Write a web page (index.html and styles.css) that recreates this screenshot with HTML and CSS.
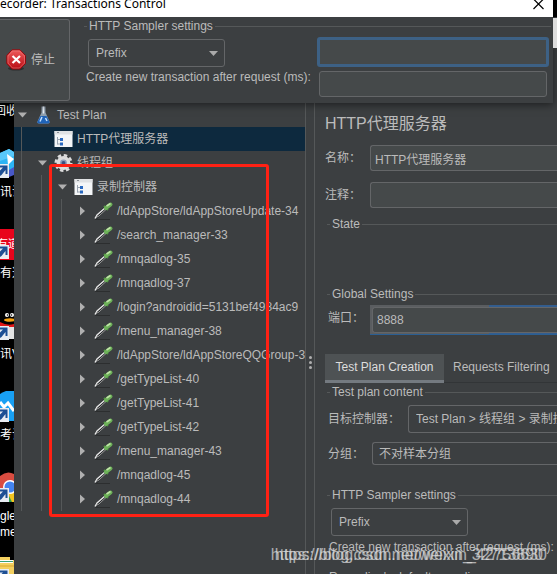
FILE: index.html
```
<!DOCTYPE html>
<html lang="zh-CN">
<head>
    <meta charset="UTF-8">
    <meta name="viewport" content="width=device-width, initial-scale=1.0">
    <title>Recorder: Transactions Control</title>
    <link rel="stylesheet" href="styles.css">
</head>
<body>
    <!-- Icons shared by the tree and the desktop -->
    <svg class="sprite" aria-hidden="true">
        <defs>
            <linearGradient id="stopRed" x1="0" y1="0" x2="0" y2="1">
                <stop offset="0" stop-color="#ef5a5a"/>
                <stop offset="1" stop-color="#b80c14"/>
            </linearGradient>
            <symbol id="open" viewBox="0 0 20 24"><path d="M4 9.500h9L8.500 14.500z" fill="#b0b0b0"/></symbol>
            <symbol id="closed" viewBox="0 0 20 24"><path d="M6 7.500l5 4.500-5 4.500z" fill="#b0b0b0"/></symbol>
            <symbol id="flask" viewBox="0 0 20 24">
                <path d="M7.500 3.500h4v6l4 9c.5 1.300-.2 2-1.500 2H5c-1.300 0-2-.7-1.500-2l4-9z" fill="#8f9fae"/>
                <path d="M6.500 13h6l3 5.500c.4 1.200 0 2-1.500 2H5c-1.500 0-1.900-.8-1.500-2z" fill="#1f63b8"/>
                <path d="M8 14l-2 4.500M11.500 15l1.500 3" stroke="#c4e0ff" stroke-width="1.500"/>
                <path d="M9.500 3.500v7" stroke="#e8eef4" stroke-width="1.500"/>
            </symbol>
            <symbol id="window" viewBox="0 0 20 24">
                <path d="M.5 4h18v16H.5z" fill="#f4f6f8"/>
                <path d="M.5 4h18v3.500H.5z" fill="#e0e2e4"/>
                <path d="M3 5.500h2" stroke="#8a9096"/>
                <path d="M3.500 10v7.500M3.500 12.500h3M3.500 17h3" stroke="#9aa4b0" fill="none"/>
                <path d="M6 11h3v3H6zM6 15.500h3v3H6z" fill="#2868c0"/>
            </symbol>
            <symbol id="gear" viewBox="0 0 20 24">
                <circle cx="9.500" cy="12" r="7.800" fill="none" stroke="#dcdcdc" stroke-width="2.500" stroke-dasharray="3.500 2.626"/>
                <circle cx="9.500" cy="12" r="5.200" fill="#8f9dba" stroke="#dcdcdc" stroke-width="3.500"/>
                <circle cx="9.500" cy="12" r="2" fill="#3c4f80"/>
            </symbol>
            <symbol id="dropper" viewBox="0 0 20 24">
                <path d="M1 20.500h15" stroke="#2c2e2f"/>
                <path d="M2 18.500L11 9.500" stroke="#25282a" stroke-width="3.500"/>
                <path d="M1 19.500l2-3.500 8-7" stroke="#e8e8e8" stroke-width="1.400" fill="none"/>
                <path d="M2 18.500l3-1.500 7-6.500" stroke="#a0a0a0" fill="none"/>
                <path d="M10 7l4 4" stroke="#4f8f42" stroke-width="2"/>
                <path d="M12 9l4.500-3.500" stroke="#6cb058" stroke-width="4" stroke-linecap="round"/>
                <path d="M12.500 7l4-2.500" stroke="#c0e4a8" stroke-width="1.500"/>
            </symbol>
            <symbol id="shortcut" viewBox="0 0 9 14">
                <path d="M0 0h9v14H0z" fill="#e8ecf2"/>
                <path d="M0 1.500h7.500V10H5.500V6L1.500 11 0 12V6.500L3 3.500H0z" fill="#1d4f94"/>
            </symbol>
        </defs>
    </svg>

    <section class="dialog">
        <header class="titlebar">
            <span>ecorder: Transactions Control</span>
            <button class="close" aria-label="Close">
                <svg width="11" height="11" viewBox="0 0 11 11"><path d="M.5-1l10 10M10.500-1l-10 10" stroke="#000" stroke-width="1.200"/></svg>
            </button>
        </header>
        <div class="dialog-body">
            <button class="stop">
                <svg width="21" height="22" viewBox="0 0 21 22">
                    <ellipse cx="10" cy="19.500" rx="8" ry="2" fill="#2c2e2f"/>
                    <path d="M6 .8h8l5.500 5.700v8L14 20H6L.8 14.500v-8z" fill="url(#stopRed)" stroke="#8e0a10"/>
                    <path d="M6.500 2h7l5 5v7l-5 5h-7L2 14V7z" fill="none" stroke="#e88080" stroke-opacity=".6"/>
                    <path d="M6.500 7l7.500 7M14 7l-7.500 7" stroke="#fff" stroke-width="2.200"/>
                </svg>
                停止
            </button>
            <fieldset class="group">
                <legend>HTTP Sampler settings</legend>
                <div class="settings">
                    <select class="combo" aria-label="Naming scheme"><option>Prefix</option></select>
                    <input class="field focused" type="text" aria-label="Prefix value">
                    <label for="newTransaction">Create new transaction after request (ms):</label>
                    <input class="field" type="text" id="newTransaction">
                </div>
            </fieldset>
        </div>
    </section>

    <div class="workspace">
        <aside class="desktop">
            <div class="bin">回收</div>
            <div class="shortcut">
                <svg viewBox="0 0 14 34">
                    <path d="M0 5L9 1l5 3v16l-8 7H0z" fill="#2cb4f4"/>
                    <path d="M0 5l9-4 5 3v4L0 13z" fill="#58c8fa"/>
                    <path d="M7 6l7 5-6 6z" fill="#fff"/>
                    <path d="M9 22l5-3v8l-5 2z" fill="#4858c8"/>
                    <use href="#shortcut" y="16" width="9" height="14"/>
                </svg>
                <span>讯说</span>
            </div>
            <div class="shortcut">
                <svg viewBox="0 0 14 34">
                    <path d="M0 0h14v31H0z" fill="#e8041c"/>
                    <text x="-3" y="19" class="logo-text">有道</text>
                    <use href="#shortcut" y="16" width="9" height="14"/>
                </svg>
                <span>有道</span>
            </div>
            <div class="shortcut">
                <svg viewBox="0 0 14 34">
                    <circle cx="7" cy="5" r="2" fill="#fff"/><circle cx="12" cy="5" r="2" fill="#fff"/>
                    <circle cx="7.500" cy="5" r=".8"/><circle cx="11.500" cy="5" r=".8"/>
                    <ellipse cx="10" cy="10" rx="6" ry="1.800" fill="#f4a010"/>
                    <path d="M0 12q7 4 14 2v4H0z" fill="#e01818"/>
                    <path d="M8 17h6v12H8z" fill="#e4e4e4"/>
                    <use href="#shortcut" y="16" width="9" height="14"/>
                </svg>
                <span>讯V</span>
            </div>
            <div class="shortcut">
                <svg viewBox="0 0 14 34">
                    <path d="M0 3q7-5 14-3v30H0z" fill="#18a0f4"/>
                    <path d="M0 11l4 5 4-4 6 8" stroke="#fff" stroke-width="3" fill="none"/>
                    <use href="#shortcut" y="17" width="9" height="14"/>
                </svg>
                <span>考试</span>
            </div>
            <div class="shortcut">
                <svg viewBox="0 0 14 34">
                    <path d="M0 4Q7-2 14 2v14H0z" fill="#d84c40"/>
                    <path d="M8 18h6v12H8z" fill="#f4c420"/>
                    <path d="M8 22l4 8H8z" fill="#2f9c50"/>
                    <circle cx="10" cy="15" r="7" fill="#fff"/>
                    <circle cx="10" cy="15" r="5.500" fill="#4484f0"/>
                    <use href="#shortcut" y="16" width="9" height="14"/>
                </svg>
                <span>gle<br>me</span>
            </div>
            <div class="shortcut">
                <svg viewBox="0 0 14 34">
                    <path d="M0 4h10v3h4v27H0z" fill="#f4d060"/>
                    <path d="M0 7h13v3H0z" fill="#fff"/>
                    <path d="M0 8.500h13" stroke="#38a078"/>
                    <path d="M0 13h14" stroke="#dca830"/>
                    <use href="#shortcut" y="16" width="9" height="14"/>
                </svg>
            </div>
        </aside>

        <nav class="tree">
            <ul>
                <li><svg><use href="#open"/></svg><svg><use href="#flask"/></svg><span>Test Plan</span></li>
                <li class="selected"><i></i><b></b><svg><use href="#window"/></svg><span>HTTP代理服务器</span></li>
                <li><i></i><svg><use href="#open"/></svg><svg><use href="#gear"/></svg><span>线程组</span></li>
                <li><i></i><i></i><svg><use href="#open"/></svg><svg><use href="#window"/></svg><span>录制控制器</span></li>
                <li><i></i><i></i><i></i><svg><use href="#closed"/></svg><svg><use href="#dropper"/></svg><span>/ldAppStore/ldAppStoreUpdate-34</span></li>
                <li><i></i><i></i><i></i><svg><use href="#closed"/></svg><svg><use href="#dropper"/></svg><span>/search_manager-33</span></li>
                <li><i></i><i></i><i></i><svg><use href="#closed"/></svg><svg><use href="#dropper"/></svg><span>/mnqadlog-35</span></li>
                <li><i></i><i></i><i></i><svg><use href="#closed"/></svg><svg><use href="#dropper"/></svg><span>/mnqadlog-37</span></li>
                <li><i></i><i></i><i></i><svg><use href="#closed"/></svg><svg><use href="#dropper"/></svg><span>/login?androidid=5131bef4984ac9</span></li>
                <li><i></i><i></i><i></i><svg><use href="#closed"/></svg><svg><use href="#dropper"/></svg><span>/menu_manager-38</span></li>
                <li><i></i><i></i><i></i><svg><use href="#closed"/></svg><svg><use href="#dropper"/></svg><span>/ldAppStore/ldAppStoreQQGroup-3</span></li>
                <li><i></i><i></i><i></i><svg><use href="#closed"/></svg><svg><use href="#dropper"/></svg><span>/getTypeList-40</span></li>
                <li><i></i><i></i><i></i><svg><use href="#closed"/></svg><svg><use href="#dropper"/></svg><span>/getTypeList-41</span></li>
                <li><i></i><i></i><i></i><svg><use href="#closed"/></svg><svg><use href="#dropper"/></svg><span>/getTypeList-42</span></li>
                <li><i></i><i></i><i></i><svg><use href="#closed"/></svg><svg><use href="#dropper"/></svg><span>/menu_manager-43</span></li>
                <li><i></i><i></i><i></i><svg><use href="#closed"/></svg><svg><use href="#dropper"/></svg><span>/mnqadlog-45</span></li>
                <li><i></i><i></i><i></i><svg><use href="#closed"/></svg><svg><use href="#dropper"/></svg><span>/mnqadlog-44</span></li>
            </ul>
            <div class="highlight"></div>
        </nav>

        <div class="splitter"><span></span><span></span><span></span></div>

        <main class="panel">
            <h1>HTTP代理服务器</h1>
            <div class="row name-row">
                <label for="name">名称：</label>
                <input class="field" type="text" id="name" value="HTTP代理服务器">
            </div>
            <div class="row name-row">
                <label for="comment">注释：</label>
                <input class="field" type="text" id="comment">
            </div>

            <fieldset class="group state">
                <legend>State</legend>
            </fieldset>

            <fieldset class="group global">
                <legend>Global Settings</legend>
                <div class="row">
                    <label for="port">端口：</label>
                    <div class="port-wrap"><input class="field" type="text" id="port" value="8888"></div>
                </div>
            </fieldset>

            <div class="tabs">
                <button class="tab active">Test Plan Creation</button>
                <button class="tab">Requests Filtering</button>
            </div>

            <fieldset class="group content">
                <legend>Test plan content</legend>
                <div class="row">
                    <label for="target">目标控制器：</label>
                    <select class="combo" id="target"><option>Test Plan &gt; 线程组 &gt; 录制控制器</option></select>
                </div>
                <div class="row">
                    <label for="grouping">分组：</label>
                    <select class="combo small" id="grouping"><option>不对样本分组</option></select>
                </div>
            </fieldset>

            <fieldset class="group sampler">
                <legend>HTTP Sampler settings</legend>
                <select class="combo" aria-label="Naming scheme"><option>Prefix</option></select>
                <p>Create new transaction after request (ms):</p>
                <p>Recording's default encoding</p>
            </fieldset>
        </main>
    </div>

    <div class="watermark">
        <span>https://blog.csdn.net/weixin_42756630</span>
        <span>https://blog.csdn.net/weixin_32713890</span>
    </div>
</body>
</html>
```
FILE: styles.css
```
* {
    margin: 0;
    padding: 0;
    box-sizing: border-box;
}

body {
    position: relative;
    display: flex;
    flex-direction: column;
    height: 100vh;
    overflow: hidden;
    background-color: #3c3f41;
    color: #bbbbbb;
    font: 12px/16px "Liberation Sans", "Noto Sans CJK SC", sans-serif;
}

input,
select,
button {
    font: inherit;
    color: inherit;
}

.sprite {
    position: absolute;
    width: 0;
    height: 0;
}

/* Recorder dialog */
.dialog {
    position: relative;
    flex: none;
    z-index: 1;
    margin-right: 4px;
    background-color: #3c3f41;
    box-shadow: 0 2px 8px rgba(0, 0, 0, 0.5), 4px -86px 0 #000000;
}

/* Edge of the window behind the dialog */
.dialog::after {
    content: "";
    position: absolute;
    top: 18px;
    left: 100%;
    width: 4px;
    height: 30px;
    background-color: #dddddd;
}

.titlebar {
    display: flex;
    justify-content: space-between;
    height: 17px;
    padding-right: 9px;
    background-color: #ffffff;
    color: #000000;
    font-family: "Noto Sans", sans-serif;
    line-height: 8px;
}

.close {
    height: 11px;
    border: none;
    background: none;
}

.close svg {
    display: block;
}

.dialog-body {
    display: flex;
    gap: 14px;
    height: 86px;
    padding: 2px 2px 2px 0;
}

.stop {
    display: flex;
    align-items: center;
    gap: 4px;
    width: 70px;
    height: 82px;
    padding-left: 6px;
    border: 1px solid #646668;
    border-left: none;
    border-radius: 0 3px 3px 0;
    background-color: #45494a;
}

/* Titled groups */
.group {
    min-width: 0;
    border: 0 solid #555859;
    border-top-width: 1px;
}

.group legend {
    margin-left: 3px;
    padding: 0 2px;
    line-height: 14px;
}

.dialog .group {
    flex: 1;
}

.settings {
    display: grid;
    grid-template-columns: 231px 1fr;
    column-gap: 2px;
    padding: 4px 2px 0 0;
}

.settings label {
    padding: 2px 0 0 2px;
    white-space: nowrap;
}

.settings .combo {
    margin: 2px 0 0 4px;
}

.settings .field {
    width: auto;
    margin: 4px 2px 0;
}

.settings .focused {
    height: 30px;
    margin: 0;
    border: 3px solid #3d6185;
}

.field {
    width: 100%;
    height: 26px;
    padding: 0 4px;
    border: 1px solid #646668;
    border-radius: 3px;
    background-color: #45494a;
    outline: none;
}

.combo {
    width: 137px;
    height: 28px;
    padding: 0 7px;
    border: 1px solid #646668;
    border-radius: 3px;
    background: url("data:image/svg+xml,%3Csvg xmlns='http://www.w3.org/2000/svg' width='9' height='5'%3E%3Cpath d='M0 0h9L4.500 5z' fill='%23aaaaaa'/%3E%3C/svg%3E") no-repeat right 6px center;
    appearance: none;
}

/* Main window */
.workspace {
    display: flex;
    flex: 1;
    min-height: 0;
}

.desktop {
    flex: none;
    width: 14px;
    overflow: hidden;
    background-color: #000000;
    color: #ffffff;
    white-space: nowrap;
}

.bin {
    height: 18px;
    text-indent: -6px;
}

.shortcut {
    height: 81px;
    padding-top: 27px;
}

.shortcut svg {
    display: block;
    width: 14px;
    height: 34px;
}

.shortcut span {
    display: block;
    padding-top: 2px;
}

.logo-text {
    fill: #ffffff;
    font-size: 11px;
}

/* Tree */
.tree {
    position: relative;
    flex: none;
    width: 292px;
    border-right: 1px solid #555859;
}

.tree ul {
    overflow: hidden;
    list-style: none;
}

.tree li {
    display: flex;
    align-items: center;
    height: 24px;
    white-space: nowrap;
}

.tree svg,
.tree i,
.tree b {
    flex: none;
    width: 20px;
    height: 24px;
}

.tree i {
    background: linear-gradient(#555859, #555859) 7px 0 / 1px 100% no-repeat;
}

.tree span {
    padding-left: 3px;
}

.selected {
    background-color: #0d293e;
}

.highlight {
    position: absolute;
    top: 61px;
    left: 35px;
    width: 220px;
    height: 353px;
    border: 3px solid #ff2114;
    border-radius: 3px;
}

.splitter {
    display: flex;
    flex: none;
    flex-direction: column;
    align-items: center;
    justify-content: center;
    gap: 2px;
    width: 9px;
    padding-top: 48px;
    border-right: 1px solid #555859;
}

.splitter span {
    width: 3px;
    height: 3px;
    border-radius: 50%;
    background-color: #b0b0b0;
}

/* Settings panel */
.panel {
    flex: 1;
    min-width: 0;
    padding-left: 10px;
    overflow: hidden;
    white-space: nowrap;
}

.panel h1 {
    height: 42px;
    font-size: 16px;
    font-weight: normal;
    line-height: 42px;
}

.row {
    display: flex;
    align-items: center;
    gap: 8px;
}

.row label {
    flex: none;
}

.panel .row .field,
.panel .row .combo {
    flex: 1;
    min-width: 0;
    padding-right: 0;
    border-right: none;
    border-radius: 3px 0 0 3px;
}

.panel .row .combo {
    background: none;
}

.name-row {
    gap: 9px;
}

.name-row + .name-row {
    margin-top: 11px;
}

.panel .group {
    margin-left: 2px;
}

.panel .group .row {
    padding-left: 1px;
}

.panel .state {
    height: 70px;
    margin-top: 9px;
}

.global {
    height: 67px;
}

.port-wrap {
    flex: 1;
    height: 30px;
    margin: 4px 0 0 -2px;
    padding: 2px 0 0 2px;
    border-bottom: 1px solid #2a5f94;
    background: linear-gradient(90deg, #5a5d60 119px, #335d8e 119px);
}

.port-wrap .field {
    display: block;
}

.tabs {
    display: flex;
    box-shadow: inset 0 -1px 0 #323537;
}

.tab {
    flex: none;
    height: 29px;
    padding: 0 9px;
    border: none;
    border-bottom: 3px solid transparent;
    background: none;
}

.tab.active {
    min-width: 119px;
    border-color: #747a80;
    background-color: #4e5254;
    color: #dddddd;
}

.panel .content {
    height: 103px;
    margin-top: 2px;
}

.content .row {
    margin-top: 6px;
}

.content .row + .row {
    margin-top: 9px;
}

.panel .row .small {
    height: 23px;
    padding: 0 6px;
}

.sampler .combo {
    display: block;
    margin: 6px 0 3px 4px;
}

.sampler p {
    padding-left: 2px;
    margin-bottom: 14px;
}

/* Blog stamp, printed twice */
.watermark span {
    position: absolute;
    right: 10px;
    bottom: 11px;
    z-index: 2;
    color: rgba(225, 225, 225, 0.7);
    font-size: 16px;
}

.watermark span + span {
    right: 14px;
}
```
